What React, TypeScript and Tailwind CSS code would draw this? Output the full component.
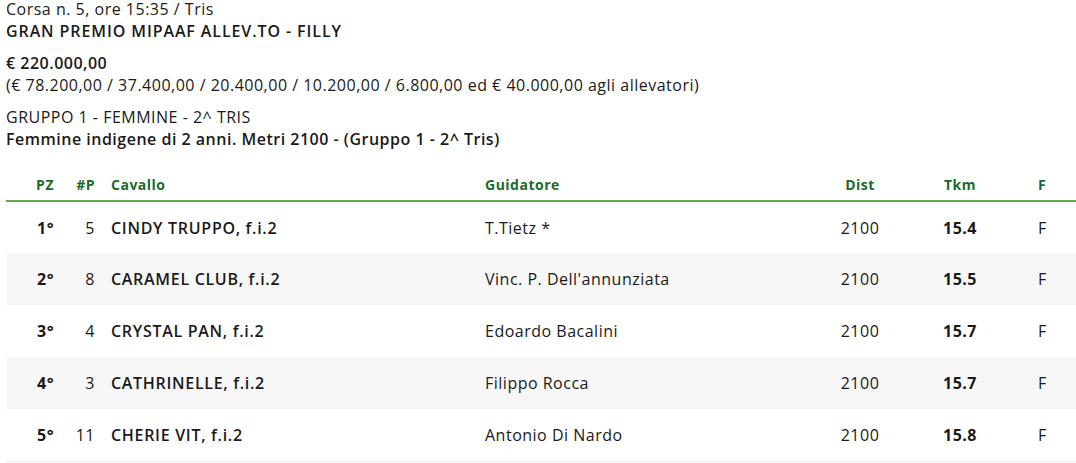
const rows = [
  { pz: '1°', num: '5', horse: 'CINDY TRUPPO, f.i.2', driver: 'T.Tietz *', dist: '2100', tkm: '15.4', f: 'F' },
  { pz: '2°', num: '8', horse: 'CARAMEL CLUB, f.i.2', driver: "Vinc. P. Dell'annunziata", dist: '2100', tkm: '15.5', f: 'F' },
  { pz: '3°', num: '4', horse: 'CRYSTAL PAN, f.i.2', driver: 'Edoardo Bacalini', dist: '2100', tkm: '15.7', f: 'F' },
  { pz: '4°', num: '3', horse: 'CATHRINELLE, f.i.2', driver: 'Filippo Rocca', dist: '2100', tkm: '15.7', f: 'F' },
  { pz: '5°', num: '11', horse: 'CHERIE VIT, f.i.2', driver: 'Antonio Di Nardo', dist: '2100', tkm: '15.8', f: 'F' },
];

export default function App() {
  return (
    <div className="bg-white pl-[6px] text-[16px] leading-[22px] tracking-[0.5px] text-[#1a1a1a] font-['Open_Sans',sans-serif] overflow-hidden h-[463px]">
      <div className="-mt-[2px]">
        <p>Corsa n. 5, ore 15:35 / Tris</p>
        <p className="font-semibold tracking-[0.9px]">GRAN PREMIO MIPAAF ALLEV.TO - FILLY</p>
      </div>
      <div className="mt-[10px]">
        <p className="font-semibold">€ 220.000,00</p>
        <p>(€ 78.200,00 / 37.400,00 / 20.400,00 / 10.200,00 / 6.800,00 ed € 40.000,00 agli allevatori)</p>
      </div>
      <div className="mt-[10px]">
        <p>GRUPPO 1 - FEMMINE - 2^ TRIS</p>
        <p className="font-semibold">Femmine indigene di 2 anni. Metri 2100 - (Gruppo 1 - 2^ Tris)</p>
      </div>

      <table className="mt-[19px] w-[1070px] table-fixed border-collapse">
        <colgroup>
          <col className="w-[56px]" />
          <col className="w-[41px]" />
          <col className="w-[374px]" />
          <col className="w-[323px]" />
          <col className="w-[120px]" />
          <col className="w-[80px]" />
          <col className="w-[76px]" />
        </colgroup>
        <thead>
          <tr className="h-[32px] border-b-2 border-[#5cad4a] text-[14px] font-bold text-[#1a6b2e]">
            <th className="pr-2 text-right">PZ</th>
            <th className="pr-2 text-right">#P</th>
            <th className="pl-2 text-left">Cavallo</th>
            <th className="pl-2 text-left">Guidatore</th>
            <th className="text-center">Dist</th>
            <th className="text-center">Tkm</th>
            <th className="pl-[38px] text-left">F</th>
          </tr>
        </thead>
        <tbody>
          {rows.map((r, i) => (
            <tr key={r.pz} className={`h-[52px] ${i % 2 === 1 ? 'bg-[#f7f7f7]' : 'bg-white'} ${i === rows.length - 1 ? 'border-b border-[#eeeeee]' : ''}`}>
              <td className="pr-2 text-right font-bold">{r.pz}</td>
              <td className="pr-2 text-right">{r.num}</td>
              <td className="pl-2 font-semibold tracking-[0.7px]">{r.horse}</td>
              <td className="pl-2">{r.driver}</td>
              <td className="text-center">{r.dist}</td>
              <td className="text-center font-bold">{r.tkm}</td>
              <td className="pl-[38px]">{r.f}</td>
            </tr>
          ))}
        </tbody>
      </table>
    </div>
  );
}
